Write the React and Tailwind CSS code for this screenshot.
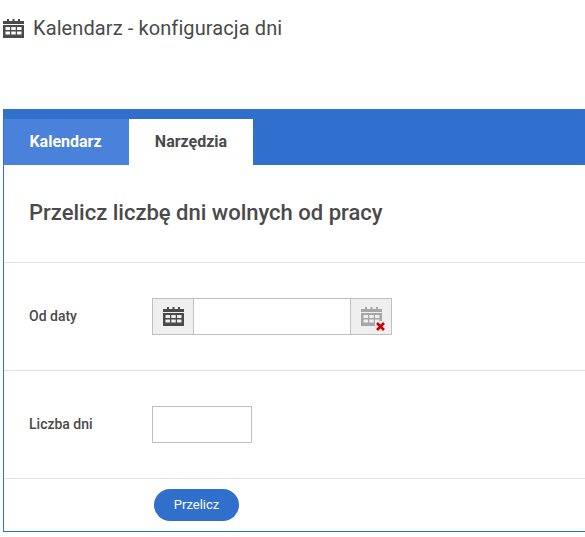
const CalendarIcon = ({ color = '#4a4a4a', className = '' }) => (
  <svg className={className} width="21" height="19" viewBox="0 0 21 19" fill="none">
    <rect x="4" y="0" width="2" height="3" fill={color} />
    <rect x="9.5" y="0" width="2" height="3" fill={color} />
    <rect x="15" y="0" width="2" height="3" fill={color} />
    <rect x="0" y="2" width="21" height="3" fill={color} />
    <path
      fillRule="evenodd"
      clipRule="evenodd"
      d="M0 6h21v13H0V6zM2.5 8v3H7V8H2.5zm5.75 0v3h4.5V8h-4.5zM14 8v3h4.5V8H14zM2.5 12.5v3H7v-3H2.5zm5.75 0v3h4.5v-3h-4.5zm5.75 0v3h4.5v-3H14z"
      fill={color}
    />
  </svg>
);

const App = () => {
  return (
    <div className="w-[585px] h-[537px] overflow-hidden bg-white font-['Roboto',sans-serif] text-[#4a4a4a]">
      <div className="h-[109px] pl-[3px] pt-[18px]">
        <div className="flex items-center h-[20px]">
          <CalendarIcon />
          <h1 className="ml-[9px] text-[20px] tracking-[0.1px] leading-[20px] font-normal">Kalendarz - konfiguracja dni</h1>
        </div>
      </div>

      <div className="ml-[3px] h-[423px] border-l border-b border-[#306fcb]">
        <div className="flex h-[56px] pt-[10px] bg-[#306fcb]">
          <div className="w-[125px] flex items-center justify-center pr-[2px] bg-[#4a81db] text-white text-[16px] font-bold">
            Kalendarz
          </div>
          <div className="w-[124px] flex items-center justify-center bg-white text-[16px] font-bold">
            Narzędzia
          </div>
        </div>

        <div className="h-[98px] pl-[25px] pt-[36px] border-b border-[#e2e2e2]">
          <h2 className="text-[22px] leading-[24px] font-medium">Przelicz liczbę dni wolnych od pracy</h2>
        </div>

        <div className="h-[108px] flex items-center pl-[25px] border-b border-[#e2e2e2]">
          <label className="w-[123px] text-[14px] font-medium">Od daty</label>
          <div className="flex h-[37px] w-[240px] border border-[#bfbfbf]">
            <div className="w-[41px] flex items-center justify-center bg-[#efefef] border-r border-[#bfbfbf]">
              <CalendarIcon />
            </div>
            <input type="text" className="flex-1 min-w-0 outline-none bg-white" />
            <div className="relative w-[41px] flex items-center justify-center bg-[#efefef] border-l border-[#bfbfbf]">
              <CalendarIcon color="#a6a6a6" />
              <svg className="absolute right-[5px] bottom-[2px]" width="11" height="11" viewBox="0 0 11 11">
                <rect x="0" y="0" width="11" height="11" fill="#efefef" />
                <path d="M2 2l7 7M9 2l-7 7" stroke="#cc0000" strokeWidth="2.6" />
              </svg>
            </div>
          </div>
        </div>

        <div className="h-[108px] flex items-center pl-[25px] border-b border-[#e2e2e2]">
          <label className="w-[123px] text-[14px] font-medium">Liczba dni</label>
          <input type="text" className="h-[37px] w-[100px] border border-[#bfbfbf] outline-none bg-white" />
        </div>

        <div className="pl-[150px] pt-[10px]">
          <button className="h-[32px] w-[85px] rounded-full bg-[#306fcb] text-white text-[13px] font-normal">
            Przelicz
          </button>
        </div>
      </div>
    </div>
  );
};

export default App;
